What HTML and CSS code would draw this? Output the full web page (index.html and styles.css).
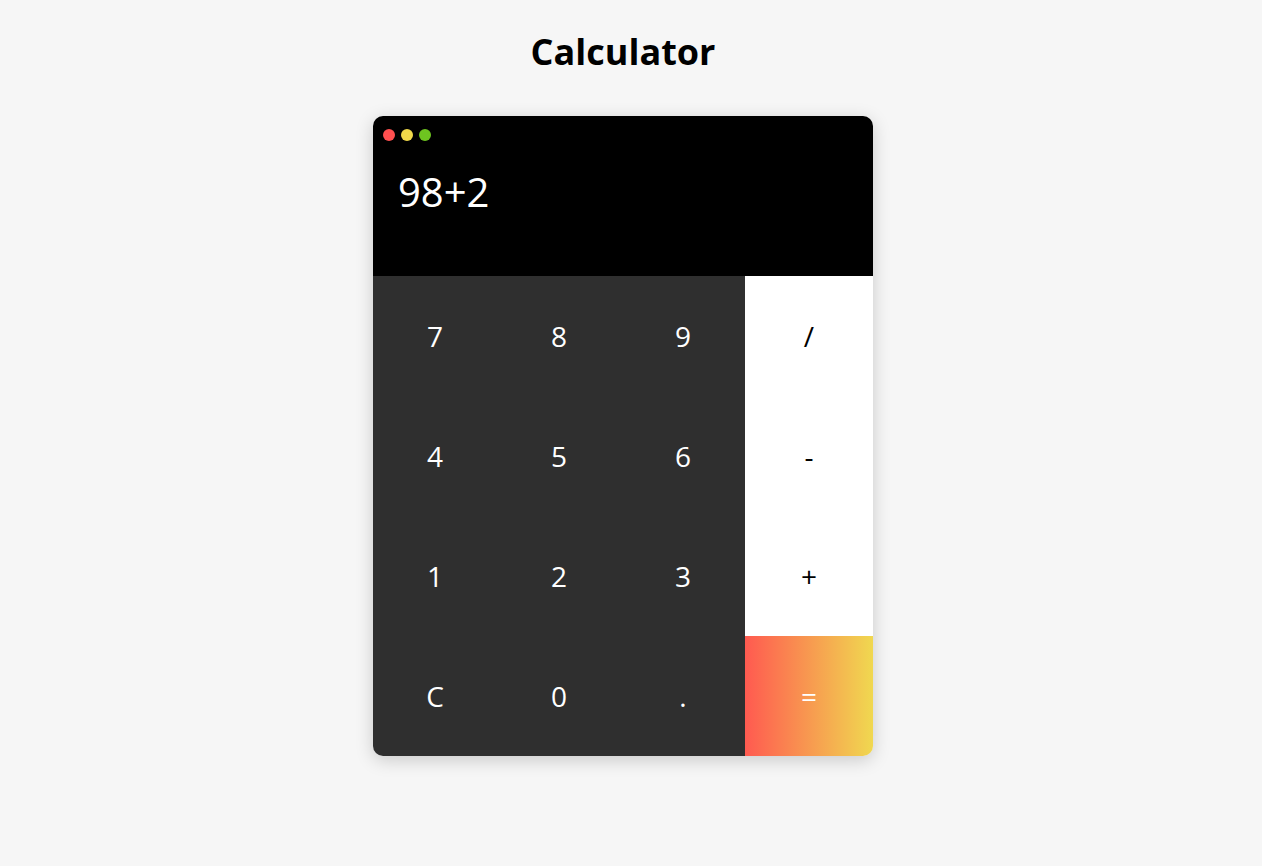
FILE: index.html
```
<!DOCTYPE html>
<html lang="en">
<head>
<meta charset="utf-8">
<title>Calculator</title>
<link rel="stylesheet" href="styles.css">
</head>
<body>
<h1 class="title">Calculator</h1>
<div class="calc">
  <div class="screen">
    <div class="dots">
      <span class="dot red"></span>
      <span class="dot yellow"></span>
      <span class="dot green"></span>
    </div>
    <div class="display">98+2</div>
  </div>
  <div class="keys">
    <button class="key">7</button>
    <button class="key">8</button>
    <button class="key">9</button>
    <button class="key op">/</button>
    <button class="key">4</button>
    <button class="key">5</button>
    <button class="key">6</button>
    <button class="key op">-</button>
    <button class="key">1</button>
    <button class="key">2</button>
    <button class="key">3</button>
    <button class="key op">+</button>
    <button class="key">C</button>
    <button class="key">0</button>
    <button class="key">.</button>
    <button class="key eq">=</button>
  </div>
</div>
</body>
</html>
```
FILE: styles.css
```
* { box-sizing: border-box; }
html, body { margin: 0; padding: 0; }
body {
  background: #f6f6f6;
  font-family: "Open Sans", "Noto Sans", sans-serif;
  display: flex;
  flex-direction: column;
  align-items: center;
  min-height: 866px;
  padding-right: 16px;
}
.title {
  margin: 26px 0 0;
  height: 90px;
  font-size: 36px;
  font-weight: 700;
  line-height: 52px;
  color: #000;
}
.calc {
  width: 500px;
  border-radius: 10px;
  overflow: hidden;
  box-shadow: 0 4px 18px rgba(0,0,0,0.18);
}
.screen {
  background: #000;
  height: 160px;
  padding: 13px 10px 0;
}
.dots { display: flex; gap: 6px; }
.dot { width: 12px; height: 12px; border-radius: 50%; }
.red { background: #ff5050; }
.yellow { background: #f0d84a; }
.green { background: #6ec420; }
.display {
  color: #fff;
  font-size: 40px;
  line-height: 54px;
  padding: 24px 0 0 15px;
}
.keys {
  display: grid;
  grid-template-columns: 124px 124px 124px 128px;
  grid-auto-rows: 120px;
}
.key {
  border: 0;
  margin: 0;
  padding: 0;
  background: #2f2f2f;
  color: #fff;
  font-family: inherit;
  font-size: 28px;
}
.key.op { background: #fff; color: #000; }
.key.eq {
  background: linear-gradient(to right, #ff5a50, #f0d850);
  color: #fff;
}
```
